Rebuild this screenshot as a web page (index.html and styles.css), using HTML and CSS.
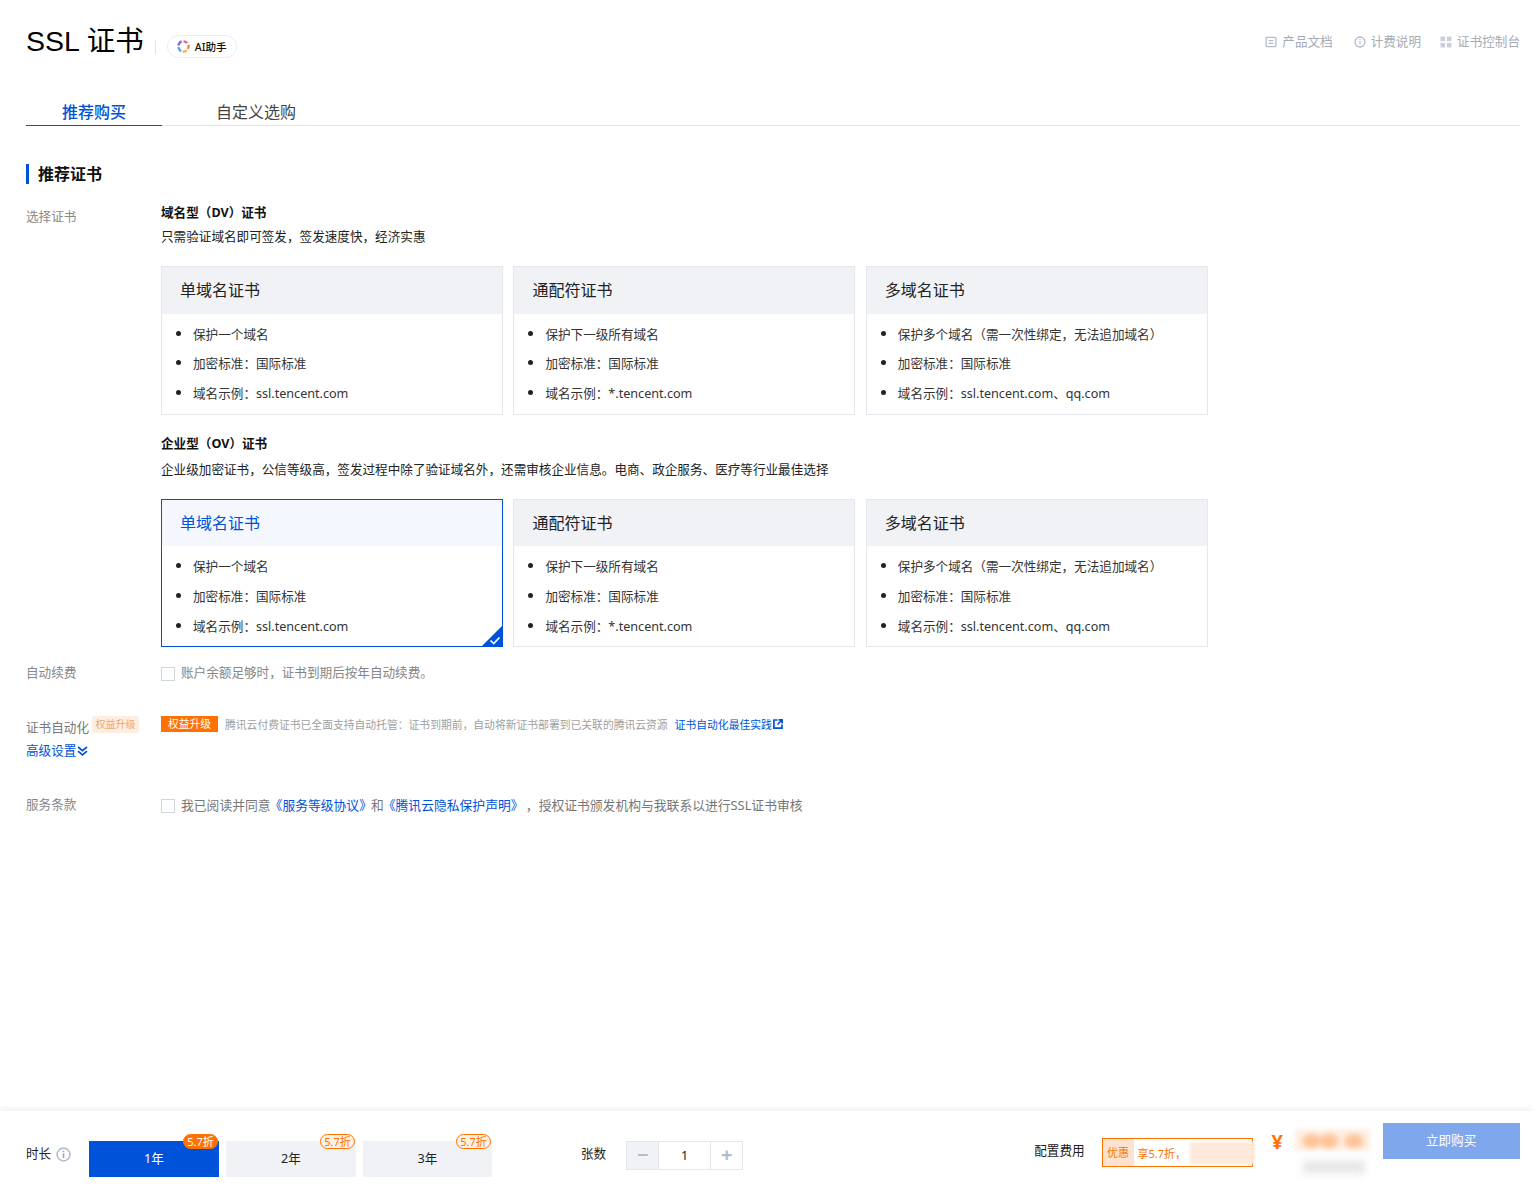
FILE: index.html
```html
<!DOCTYPE html>
<html lang="zh-CN">
<head>
<meta charset="utf-8">
<title>SSL 证书</title>
<link rel="stylesheet" href="styles.css">
</head>
<body>
<div class="page">
  <main class="main">
    <header class="head">
      <div class="head-left">
        <h1 class="title">SSL 证书</h1>
        <span class="head-sep"></span>
        <span class="ai-pill">
          <svg class="ai-logo" viewBox="0 0 14 14" width="13" height="13" fill="none" stroke-width="2.4">
            <path d="M5 1.5 A5.5 5.5 0 0 0 1.6 6" stroke="#7b6cf0"/>
            <path d="M1.6 7.5 A5.5 5.5 0 0 0 4.5 12" stroke="#4aa8f5"/>
            <path d="M6 12.6 A5.5 5.5 0 0 0 10.5 11" stroke="#f7b23b"/>
            <path d="M11.5 9.5 A5.5 5.5 0 0 0 12.4 5" stroke="#f5813f"/>
            <path d="M11 3.2 A5.5 5.5 0 0 0 7 1.4" stroke="#ec5f7a"/>
          </svg>
          <span>AI助手</span>
        </span>
      </div>
      <nav class="head-links">
        <a class="head-link">
          <svg viewBox="0 0 12 12" width="12" height="12" fill="none" stroke="#b4bccb" stroke-width="1.3"><rect x="1.1" y="1.4" width="9.8" height="9.2" rx=".6"/><path d="M3.6 4.7h4.8M3.6 7.3h4.8"/></svg>
          <span>产品文档</span>
        </a>
        <a class="head-link">
          <svg viewBox="0 0 12 12" width="12" height="12" fill="none" stroke="#b4bccb" stroke-width="1.3"><circle cx="6" cy="6" r="5"/><path d="M6 5.2v3.4M6 3.1v1.2"/></svg>
          <span>计费说明</span>
        </a>
        <a class="head-link">
          <svg viewBox="0 0 12 12" width="12" height="12" fill="#c9cfdb"><rect x=".5" y=".5" width="4.6" height="4.6"/><rect x="6.9" y=".5" width="4.6" height="4.6"/><rect x=".5" y="6.9" width="4.6" height="4.6"/><rect x="6.9" y="6.9" width="4.6" height="4.6"/></svg>
          <span>证书控制台</span>
        </a>
      </nav>
    </header>

    <div class="tabs">
      <a class="tab tab-active">推荐购买</a>
      <a class="tab tab-plain">自定义选购</a>
    </div>

    <h2 class="section-title">推荐证书</h2>

    <section class="row row-certs">
      <div class="row-label">选择证书</div>
      <div class="row-body">
        <h3 class="group-title">域名型（DV）证书</h3>
        <p class="group-desc">只需验证域名即可签发，签发速度快，经济实惠</p>
        <div class="cards cards-dv">
          <article class="card">
            <h4 class="card-head">单域名证书</h4>
            <ul class="card-list"><li>保护一个域名</li><li>加密标准：国际标准</li><li>域名示例：ssl.tencent.com</li></ul>
          </article>
          <article class="card">
            <h4 class="card-head">通配符证书</h4>
            <ul class="card-list"><li>保护下一级所有域名</li><li>加密标准：国际标准</li><li>域名示例：*.tencent.com</li></ul>
          </article>
          <article class="card">
            <h4 class="card-head">多域名证书</h4>
            <ul class="card-list"><li>保护多个域名（需一次性绑定，无法追加域名）</li><li>加密标准：国际标准</li><li>域名示例：ssl.tencent.com、qq.com</li></ul>
          </article>
        </div>
        <h3 class="group-title group-second">企业型（OV）证书</h3>
        <p class="group-desc group-desc-second">企业级加密证书，公信等级高，签发过程中除了验证域名外，还需审核企业信息。电商、政企服务、医疗等行业最佳选择</p>
        <div class="cards cards-ov">
          <article class="card card-selected">
            <h4 class="card-head">单域名证书</h4>
            <ul class="card-list"><li>保护一个域名</li><li>加密标准：国际标准</li><li>域名示例：ssl.tencent.com</li></ul>
            <span class="corner">
              <svg viewBox="0 0 22 22" width="22" height="22"><path d="M22 0V22H0Z" fill="#0052d9"/><path d="M9.5 15.5l3.2 3 5.8-6" fill="none" stroke="#fff" stroke-width="1.7"/></svg>
            </span>
          </article>
          <article class="card">
            <h4 class="card-head">通配符证书</h4>
            <ul class="card-list"><li>保护下一级所有域名</li><li>加密标准：国际标准</li><li>域名示例：*.tencent.com</li></ul>
          </article>
          <article class="card">
            <h4 class="card-head">多域名证书</h4>
            <ul class="card-list"><li>保护多个域名（需一次性绑定，无法追加域名）</li><li>加密标准：国际标准</li><li>域名示例：ssl.tencent.com、qq.com</li></ul>
          </article>
        </div>
      </div>
    </section>

    <section class="row row-renew">
      <div class="row-label">自动续费</div>
      <label class="check-line"><span class="checkbox"></span><span>账户余额足够时，证书到期后按年自动续费。</span></label>
    </section>

    <section class="row row-auto">
      <div class="auto-label">
        <div class="auto-name"><span class="auto-text">证书自动化</span><span class="soft-tag">权益升级</span></div>
        <a class="adv-link">高级设置<svg viewBox="0 0 11 10" width="11" height="10" fill="none" stroke="#0052d9" stroke-width="1.7"><path d="M1 1l4.5 3.6L10 1M1 5.2l4.5 3.6L10 5.2"/></svg></a>
      </div>
      <div class="auto-body">
        <span class="solid-tag">权益升级</span>
        <span class="auto-desc">腾讯云付费证书已全面支持自动托管：证书到期前，自动将新证书部署到已关联的腾讯云资源</span>
        <a class="auto-link">证书自动化最佳实践<svg viewBox="0 0 10 10" width="10" height="10" fill="none" stroke="#0052d9" stroke-width="1.7"><path d="M4.5 1H.9v8.1H9V5.5M5.5.9h3.6v3.6M9 1L4.5 5.5"/></svg></a>
      </div>
    </section>

    <section class="row row-terms">
      <div class="row-label">服务条款</div>
      <label class="check-line terms-line"><span class="checkbox"></span><span>我已阅读并同意<a class="inline-link">《服务等级协议》</a>和<a class="inline-link">《腾讯云隐私保护声明》</a> ，授权证书颁发机构与我联系以进行SSL证书审核</span></label>
    </section>
  </main>

  <footer class="foot">
    <div class="foot-duration">
      <span class="foot-label">时长</span>
      <svg class="info-icon" viewBox="0 0 14 14" width="15" height="15" fill="none" stroke="#b4bccb" stroke-width="1.5"><circle cx="7" cy="7" r="6"/><path d="M7 6v4.2M7 3.4v1.5" stroke="#98a2b3"/></svg>
    </div>
    <div class="durations">
      <button class="dur dur-on">1年<span class="dur-badge dur-badge-on">5.7折</span></button>
      <button class="dur">2年<span class="dur-badge">5.7折</span></button>
      <button class="dur">3年<span class="dur-badge">5.7折</span></button>
    </div>
    <span class="foot-label count-label">张数</span>
    <div class="stepper">
      <span class="step step-minus">−</span>
      <span class="step-value">1</span>
      <span class="step step-plus">+</span>
    </div>
    <span class="foot-label fee-label">配置费用</span>
    <div class="promo">
      <span class="promo-tag">优惠</span>
      <span class="promo-text">享5.7折，</span>
      <span class="promo-blur"></span>
    </div>
    <span class="yen">¥</span>
    <div class="price">
      <span class="price-main"></span>
      <span class="price-sub"></span>
    </div>
    <button class="buy">立即购买</button>
  </footer>
</div>
</body>
</html>
```

FILE: styles.css
```css
* { box-sizing: border-box; }
html, body { margin: 0; padding: 0; }
body {
  font-family: "Noto Sans", "Noto Sans CJK SC", sans-serif;
  font-size: 12.6px;
  color: #222;
  background: #fff;
}
h1, h2, h3, h4, p, ul { margin: 0; padding: 0; }
a { text-decoration: none; }

.page { min-height: 1188px; display: flex; flex-direction: column; }
.main { flex: 1; padding: 0 13px 0 26px; }

/* header */
.head { display: flex; justify-content: space-between; height: 82px; }
.head-left { display: flex; align-items: flex-start; }
.title { font-size: 28.5px; font-weight: 400; line-height: 40px; margin-top: 21px; color: #000; font-family: "Liberation Sans", "Noto Sans CJK SC", sans-serif; white-space: nowrap; }
.head-sep { width: 1px; height: 14px; background: #e0e3ea; margin: 40px 11px 0 11px; }
.ai-pill {
  display: flex; align-items: center; gap: 5px;
  height: 23px; margin-top: 35px; padding: 0 9px;
  border: 1px solid #eceef4; border-radius: 12px;
  font-size: 10.6px; font-weight: 500; color: #111;
}
.head-links { display: flex; gap: 21px; margin-top: 33px; height: 18px; color: #a5abb5; }
.head-link { display: flex; align-items: center; gap: 5px; line-height: 18px; }
.head-link:last-child { margin-left: -2px; }

/* tabs */
.tabs { display: flex; height: 44px; border-bottom: 1px solid #e1e4ea; }
.tab { font-size: 16px; line-height: 24px; padding-top: 18px; height: 44px; color: #444; }
.tab-active { width: 136px; padding-left: 36px; color: #0052d9; font-weight: 500; border-bottom: 1px solid #0052d9; }
.tab-plain { padding-left: 54px; }

.section-title {
  margin-top: 38px; height: 20px; line-height: 20px;
  padding-left: 9px; border-left: 3px solid #0052d9;
  font-size: 16px; font-weight: 700; color: #111;
}

/* rows */
.row { display: flex; }
.row-label { width: 135px; flex: none; color: #888; line-height: 18px; }
.row-certs { margin-top: 20px; }
.row-certs > .row-label { margin-top: 4px; }
.row-body { width: 1047px; }

.group-title { font-size: 12.6px; font-weight: 700; line-height: 18px; color: #111; }
.group-desc { margin-top: 6px; line-height: 18px; color: #222; }
.group-second { margin-top: 20px; }
.group-desc-second { margin-top: 8px; }

.cards { display: grid; grid-template-columns: repeat(3, 342px); column-gap: 10.4px; margin-top: 20px; }
.cards-ov { margin-top: 20px; }
.card { position: relative; height: 149px; border: 1px solid #e4e7ec; }
.cards-ov .card { height: 148px; }
.card-head {
  height: 47px; padding-left: 18px;
  background: #f1f2f5;
  font-size: 16px; font-weight: 400; line-height: 47px; color: #222;
}
.cards-ov .card-head { height: 46px; line-height: 47px; }
.card-list { list-style: disc; padding: 5px 0 0 31px; color: #333; }
.card-list li { height: 30px; line-height: 30px; white-space: nowrap; }
.card-list li:nth-child(2) { line-height: 29px; }
.cards-dv .card-list li:nth-child(2) { height: 29px; line-height: 27px; }
.card-list li::marker { font-size: 14px; color: #222; }
.card-selected { border-color: #0052d9; }
.card-selected .card-head { background: #f4f7fe; color: #0052d9; }
.corner { position: absolute; right: -1px; bottom: -1px; width: 22px; height: 22px; }
.corner svg { display: block; }

.row-renew { margin-top: 16px; }
.row-renew .row-label { margin-top: 1px; }
.check-line { display: flex; align-items: center; gap: 6px; color: #858585; line-height: 18px; }
.checkbox { width: 14px; height: 14px; margin-top: 2px; border: 1px solid #cfd5df; background: #fff; flex: none; }

.row-auto { margin-top: 34px; }
.auto-label { width: 135px; flex: none; }
.auto-name { display: flex; align-items: flex-start; height: 26px; }
.auto-text { color: #777; line-height: 18px; margin-top: 3px; white-space: nowrap; }
.soft-tag { margin: 0 0 0 3px; padding: 0 3.5px; height: 17px; line-height: 17px; background: #fdeee2; border-radius: 3px; color: #eda76a; font-size: 10px; white-space: nowrap; }
.adv-link { display: flex; align-items: center; gap: 1px; color: #0052d9; line-height: 18px; }
.auto-body { display: flex; align-items: center; height: 16px; }
.solid-tag { width: 57px; height: 16px; line-height: 16px; text-align: center; background: #ff7200; color: #fff; font-size: 10.8px; }
.auto-desc { margin-left: 7px; font-size: 10.8px; color: #a0a0a0; white-space: nowrap; }
.auto-link { display: flex; align-items: center; gap: 1px; margin-left: 7px; font-size: 10.8px; color: #0052d9; white-space: nowrap; }

.row-terms { margin-top: 36px; }
.terms-line { font-size: 12.8px; color: #777; margin-top: -1px; }
.inline-link { color: #0052d9; margin: 0 -1px; }

/* footer */
.foot {
  display: flex; align-items: flex-start; flex: none;
  height: 77px; padding: 0 13px 0 26px;
  background: #fff;
  box-shadow: 0 -2px 6px rgba(40, 50, 90, .08);
}
.foot-duration { display: flex; align-items: center; gap: 5px; width: 63px; margin-top: 34px; }
.foot-label { line-height: 18px; color: #222; white-space: nowrap; }
.info-icon { flex: none; }
.durations { display: flex; gap: 7px; margin-top: 30px; }
.dur {
  position: relative; width: 130px; height: 36px; padding: 0; border: 0;
  background: #f1f2f5; color: #222;
  font: inherit; line-height: 36px; text-align: center;
}
.dur:last-child { width: 129px; }
.dur-on { background: #0052d9; color: #fff; }
.dur-badge {
  position: absolute; top: -7px; right: 1px;
  width: 35px; height: 15px; border: 1px solid #ff7200; border-radius: 8px;
  background: #fff1e6; color: #ff7200;
  font-size: 11px; line-height: 13px; text-align: center; white-space: nowrap;
}
.dur-badge-on { background: #ff7200; color: #fff; }
.count-label { margin: 34px 0 0 89px; }
.stepper { display: flex; width: 117px; height: 29px; margin: 30px 0 0 20px; border: 1px solid #e3e6ec; }
.step { width: 32px; flex: none; text-align: center; font-size: 20px; font-weight: 700; line-height: 26px; color: #b4bccb; }
.step-minus { background: #f1f2f5; border-right: 1px solid #e3e6ec; }
.step-value { flex: 1; text-align: center; line-height: 27px; color: #222; }
.step-plus { border-left: 1px solid #e3e6ec; }
.fee-label { margin: 31px 0 0 291px; }
.promo {
  display: flex; align-items: center; gap: 4px;
  width: 151px; height: 29px; margin: 27px 0 0 17px;
  border: 1px solid #ff7200; color: #ff7200; font-size: 11px;
}
.promo-tag { width: 31px; height: 27px; line-height: 27px; text-align: center; background: #fde3cf; flex: none; }
.promo-text { white-space: nowrap; }
.promo-blur { width: 65px; height: 22px; margin: 0 4px 0 auto; background: #ffe9da; filter: blur(1.5px); flex: none; }
.yen { margin: 18px 0 0 19px; width: 12px; font-size: 20px; font-weight: 700; line-height: 26px; color: #ff7200; }
.price { position: relative; width: 75px; margin: 0 0 0 11px; height: 77px; }
.price-main {
  position: absolute; left: 0; top: 18px; width: 75px; height: 22px;
  background:
    radial-gradient(ellipse 12px 9px at 17px 12px, #ffc499 55%, transparent 100%),
    radial-gradient(ellipse 12px 9px at 34px 12px, #ffc499 55%, transparent 100%),
    radial-gradient(ellipse 12px 9px at 59px 12px, #ffc499 55%, transparent 100%),
    #ffeee2;
  filter: blur(2px);
}
.price-sub { position: absolute; left: 8px; top: 50px; width: 62px; height: 12px; background: #e4e4e4; filter: blur(4px); }
.buy {
  width: 137px; height: 36px; margin: 12px 0 0 13px; padding: 0; border: 0;
  background: #7fa8ec; color: #fff; font: inherit; line-height: 36px;
}
```
